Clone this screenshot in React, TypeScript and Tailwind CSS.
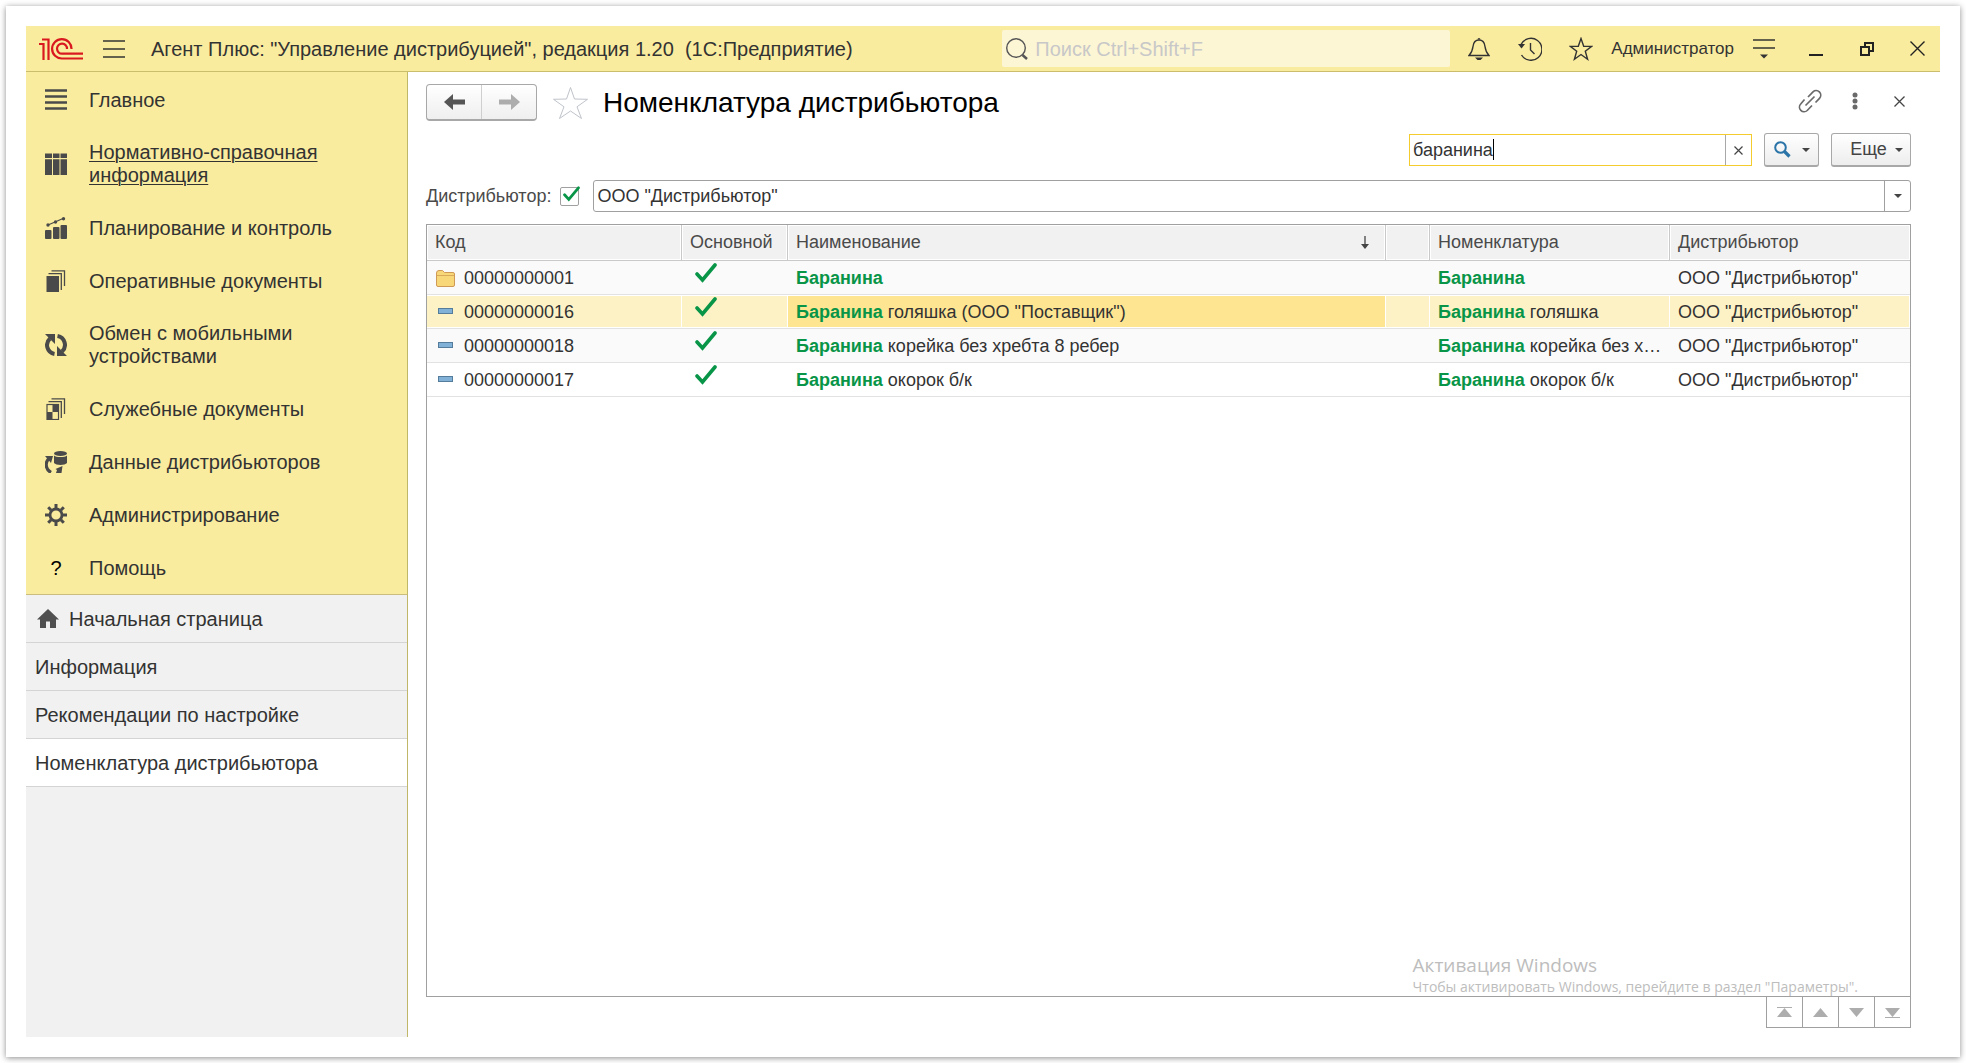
import { useState } from "react";
import type { ReactNode } from "react";
import clsx from "clsx";

const ink = "#4a4a4a";

const sections: { label: string; icon: ReactNode; active?: boolean }[] = [
  {
    label: "Главное",
    icon: <path d="M0 1.5h22M0 7.5h22M0 13.5h22M0 19.5h22" stroke={ink} strokeWidth="2.600" />,
  },
  {
    label: "Нормативно-справочная информация",
    active: true,
    icon: <path d="M0 .5h7v4.500H0zM8 .5h6.500v4.500H8zM15.500 .5h6.500v4.500h-6.500zM0 6.200h7V22H0zM8 6.200h6.500V22H8zM15.500 6.200h6.500V22h-6.500z" fill={ink} />,
  },
  {
    label: "Планирование и контроль",
    icon: (
      <>
        <rect y="13" width="6.500" height="9" rx="1" fill={ink} />
        <rect x="8" y="10" width="6.500" height="12" rx="1" fill={ink} />
        <rect x="15.500" y="8" width="6.500" height="14" rx="1" fill={ink} />
        <path d="M3 8l7-3 8-3.500" stroke={ink} strokeWidth="1.200" fill="none" />
        <circle cx="3" cy="8" r="1.700" fill={ink} />
        <circle cx="10.500" cy="5" r="1.700" fill={ink} />
        <circle cx="18.500" cy="1.800" r="1.700" fill={ink} />
      </>
    ),
  },
  {
    label: "Оперативные документы",
    icon: (
      <>
        <rect x="1.500" y="6" width="12.500" height="16" fill={ink} />
        <path d="M3.500 3.700h12.800V20M6.500.800h13V16" stroke={ink} strokeWidth="1.300" fill="none" />
      </>
    ),
  },
  {
    label: "Обмен с мобильными устройствами",
    icon: (
      <>
        <path d="M9.500 20A9 9 0 0 1 5 4.500M12.500 2A9 9 0 0 1 17 17.500" stroke={ink} strokeWidth="4" fill="none" />
        <path d="M0 0h10v10zM22 22H12V12z" fill={ink} />
      </>
    ),
  },
  {
    label: "Служебные документы",
    icon: (
      <>
        <rect x="2" y="6.500" width="11.500" height="15" stroke={ink} strokeWidth="1.200" fill="none" />
        <path d="M7.500 7H13v7H7.500zM2 14h5.500v7.500H2z" fill={ink} />
        <path d="M3.500 3.700h12.800V20M6.500.800h13V16" stroke={ink} strokeWidth="1.300" fill="none" />
      </>
    ),
  },
  {
    label: "Данные дистрибьюторов",
    icon: (
      <>
        <ellipse cx="15.500" cy="2.500" rx="6.500" ry="2.500" fill={ink} />
        <path d="M9 4.500c2 2 11 2 13 0V12c-2 2.500-11 2.500-13 0z" fill={ink} />
        <path d="M6 21.500C0 18 0 11 4 7.500" stroke={ink} strokeWidth="3.200" fill="none" />
        <path d="M0 5h8l-2 7zM11 22l1-3-1.500-1 7-3-1 7z" fill={ink} />
      </>
    ),
  },
  {
    label: "Администрирование",
    icon: (
      <>
        <circle cx="11" cy="11" r="6" stroke={ink} strokeWidth="2.800" fill="none" />
        <path d="M11 0v4M11 18v4M0 11h4M18 11h4M3.200 3.200l3 3M15.800 15.800l3 3M3.200 18.800l3-3M15.800 6.200l3-3" stroke={ink} strokeWidth="3" />
      </>
    ),
  },
  { label: "Помощь", icon: null },
];

const tabs = ["Начальная страница", "Информация", "Рекомендации по настройке", "Номенклатура дистрибьютора"];

const rows = [
  { code: "00000000001", folder: true, name: "", item: "" },
  { code: "00000000016", name: "голяшка (ООО \"Поставщик\")", item: "голяшка", selected: true },
  { code: "00000000018", name: "корейка без хребта 8 ребер", item: "корейка без хребта 8 ребер" },
  { code: "00000000017", name: "окорок б/к", item: "окорок б/к" },
];

function Logo() {
  return (
    <svg className="w-11 h-[22px]" viewBox="0 0 44 22" fill="none" stroke="#d9191f" strokeWidth="2.200">
      <path d="M0 6h4.500v16M3 1.500h6.500V22" />
      <path d="M32.500 11A9.700 9.700 0 1 0 23 20.500h21" />
      <path d="M28 11a5 5 0 1 0-5 4.700h21" />
    </svg>
  );
}

function Check({ className }: { className?: string }) {
  return (
    <svg className={className} viewBox="0 0 22 20" fill="none" stroke="#089548" strokeWidth="3.600" strokeLinecap="round">
      <path d="M2 11l5.500 6L20 2" />
    </svg>
  );
}

function Caret() {
  return (
    <svg className="w-2 h-1" viewBox="0 0 8 4">
      <path d="M0 0h8L4 4z" fill="#444" />
    </svg>
  );
}

function FolderIcon() {
  return (
    <svg className="w-[19px] h-[17px]" viewBox="0 0 19 17">
      <path d="M.5 3Q.5.500 3 .500h3.500L8.500 2.500H17q1.500 0 1.500 1.500v11q0 1.500-1.500 1.500H2Q.5 16.500.5 15z" fill="#f8d778" stroke="#cf9a55" />
      <path d="M1 5.500h17" stroke="#d9a95c" />
    </svg>
  );
}

function ItemIcon() {
  return (
    <svg className="w-[15px] h-[6px] ml-0.5 mb-1" viewBox="0 0 15 6">
      <rect x=".5" y=".5" width="14" height="5" fill="#82b1d8" stroke="#557c9b" />
    </svg>
  );
}

function TitleBar() {
  return (
    <header className="h-[46px] flex items-center bg-[#faec9e] border-b border-[#cbbd6c] pl-[13px] pr-[15px]">
      <Logo />
      <button aria-label="Меню" className="ml-5">
        <svg className="w-[22px] h-[18px]" viewBox="0 0 22 18" stroke="#333" strokeWidth="1.300">
          <path d="M0 1h22M0 9h22M0 17h22" />
        </svg>
      </button>
      <h1 className="ml-[26px] flex-1 text-[20px] whitespace-pre">Агент Плюс: "Управление дистрибуцией", редакция 1.20  (1С:Предприятие)</h1>
      <label className="w-[448px] h-[37px] flex items-center gap-[7px] pl-1 rounded-[2px] bg-[#fdf6d5]">
        <svg className="w-[22px] h-[22px] shrink-0" viewBox="0 0 22 22" fill="none" stroke="#555">
          <circle cx="10" cy="10" r="9.300" strokeWidth="1.400" />
          <path d="M16.500 17l4.500 4" strokeWidth="2.500" />
        </svg>
        <input aria-label="Поиск" placeholder="Поиск Ctrl+Shift+F" className="flex-1 min-w-0 text-[20px] bg-transparent outline-none placeholder:text-[#c8c8c8]" />
      </label>
      <div className="flex items-center ml-[18px]">
        <button aria-label="Уведомления">
          <svg className="w-[22px] h-[24px]" viewBox="0 0 22 24" fill="none" stroke="#333" strokeWidth="1.400">
            <path d="M1 18.500h20c-3-3-3.500-5-4-9C16.500 5 14 3 11 3S5.500 5 5 9.500c-.5 4-1 6-4 9z" />
            <path d="M9.500 2.500a1.500 1.500 0 0 1 3 0M7 20.500h8l-2.500 2.500h-3z" fill="#333" stroke="none" />
          </svg>
        </button>
        <button aria-label="История" className="ml-7">
          <svg className="w-6 h-6" viewBox="0 0 24 24" fill="none" stroke="#333" strokeWidth="1.400">
            <path d="M3 7.500A11 11 0 1 1 3.500 18M12.500 6v7l4 4" />
            <path d="M0 7h7l-3.500 4.500z" fill="#333" stroke="none" />
          </svg>
        </button>
        <button aria-label="Избранное" className="ml-[27px]">
          <svg className="w-6 h-6" viewBox="0 0 24 24" fill="none" stroke="#333" strokeWidth="1.400">
            <path d="M12 1.500l2.700 7.700 8 .200-6.400 4.900 2.300 7.900L12 17.500l-6.600 4.700 2.300-7.900L1.300 9.400l8-.200z" />
          </svg>
        </button>
        <button className="ml-[18px] text-[17px]">Администратор</button>
        <button aria-label="Настройка панели" className="ml-[19px]">
          <svg className="w-[22px] h-5" viewBox="0 0 22 20" stroke="#333" strokeWidth="1.400">
            <path d="M0 1h22M0 9h22" />
            <path d="M7 15.500h8l-4 4z" fill="#333" stroke="none" />
          </svg>
        </button>
        <button aria-label="Свернуть" className="ml-[34px]">
          <svg className="w-[14px] h-[14px]" viewBox="0 0 14 14">
            <path d="M0 13h14" stroke="#222" strokeWidth="2" />
          </svg>
        </button>
        <button aria-label="Развернуть" className="ml-[37px]">
          <svg className="w-[14px] h-[14px]" viewBox="0 0 14 14" fill="none" stroke="#222" strokeWidth="2">
            <path d="M1 5h8v8H1zM5 5V1h8v8H9" />
          </svg>
        </button>
        <button aria-label="Закрыть" className="ml-9">
          <svg className="w-[15px] h-[15px]" viewBox="0 0 15 15" stroke="#222" strokeWidth="1.400">
            <path d="M.5.500l14 14M14.500.500l-14 14" />
          </svg>
        </button>
      </div>
    </header>
  );
}

function Sidebar() {
  return (
    <aside className="w-[382px] shrink-0 flex flex-col bg-[#f1f1f1] border-r border-[#c0b768] text-[20px] leading-[23px]">
      <nav className="pt-px bg-[#faec9e] border-b border-[#cbbd7c]">
        {sections.map((s) => (
          <a key={s.label} href="#" className="min-h-[53px] flex items-center pt-[15px] pb-[14px] pl-[19px] pr-12">
            {s.icon ? (
              <svg className="w-[22px] h-[22px] shrink-0" viewBox="0 0 22 22">{s.icon}</svg>
            ) : (
              <span className="w-[22px] text-center text-black">?</span>
            )}
            <span className={clsx("ml-[22px]", s.active && "underline underline-offset-2 decoration-1")}>{s.label}</span>
          </a>
        ))}
      </nav>
      {tabs.map((tab, i) => (
        <a
          key={tab}
          href="#"
          className={clsx("h-12 flex items-center pt-0.5 pl-[9px] border-b border-[#d4d4d4]", i === tabs.length - 1 && "bg-white")}
        >
          {i === 0 && (
            <svg className="w-[22px] h-[19px] ml-0.5 mr-[10px] mb-0.5" viewBox="0 0 22 19">
              <path d="M11 0l11 10.500h-3V19h-6v-6.500H9V19H3v-8.500H0z" fill="#505050" />
            </svg>
          )}
          {tab}
        </a>
      ))}
    </aside>
  );
}

function FormHeader() {
  return (
    <div className="h-[37px] flex items-center">
      <div className="h-full w-[111px] flex rounded-[4px] border border-[#a8a8a8] border-b-2 bg-linear-to-b from-white to-[#efefef]">
        <button aria-label="Назад" className="flex-1 flex items-center justify-center border-r border-[#cfcfcf]">
          <svg className="w-[21px] h-4" viewBox="0 0 21 16">
            <path d="M0 8l9-8v5.500h12v5H9V16z" fill="#555" />
          </svg>
        </button>
        <button aria-label="Вперед" className="flex-1 flex items-center justify-center">
          <svg className="w-[21px] h-4" viewBox="0 0 21 16">
            <path d="M21 8l-9-8v5.500H0v5h12V16z" fill="#adadad" />
          </svg>
        </button>
      </div>
      <button aria-label="В избранное" className="ml-4">
        <svg className="w-[35px] h-[34px]" viewBox="0 0 35 34" fill="none" stroke="#bfc3ca">
          <path d="M17.500 1.500l4 11.500 13 .300L24 20.800l4.500 11.700-11-7.500-11 7.500L11 20.800.500 13.300l13-.300z" />
        </svg>
      </button>
      <h2 className="ml-[15px] flex-1 text-[28px] text-black">Номенклатура дистрибьютора</h2>
      <div className="flex items-center pb-[3px] pr-[6px]">
        <button aria-label="Ссылка">
          <svg className="w-6 h-6" viewBox="0 0 24 24" fill="none" stroke="#6a6a6a" strokeWidth="1.700">
            <path d="M7.500 16.500l9-9M10 8l5-5.200a4.600 4.600 0 0 1 6.500 6.500L17.500 13.500M14 16.500l-4.800 5a4.600 4.600 0 0 1-6.500-6.500L6.500 10.500" />
          </svg>
        </button>
        <button aria-label="Действия" className="ml-[30px]">
          <svg className="w-[6px] h-[18px]" viewBox="0 0 6 18" fill="#6a6a6a">
            <circle cx="3" cy="3" r="2.500" />
            <circle cx="3" cy="9" r="2.500" />
            <circle cx="3" cy="15" r="2.500" />
          </svg>
        </button>
        <button aria-label="Закрыть форму" className="ml-9">
          <svg className="w-[11px] h-[11px]" viewBox="0 0 11 11" stroke="#444" strokeWidth="1.300">
            <path d="M.5.500l10 10M10.500.500l-10 10" />
          </svg>
        </button>
      </div>
    </div>
  );
}

function SearchRow() {
  const [query, setQuery] = useState("баранина");

  return (
    <div className="mt-3 flex items-center justify-end">
      <div className="relative w-[343px] h-8 flex border border-[#f5cc2e]">
        <input
          aria-label="Поиск по списку"
          value={query}
          onChange={(e) => setQuery(e.target.value)}
          className="flex-1 min-w-0 pl-[3px] outline-none"
        />
        {query === "баранина" && <span className="absolute left-[83px] top-1 w-px h-[21px] bg-black" />}
        <button aria-label="Очистить" onClick={() => setQuery("")} className="w-[26px] flex items-center justify-center border-l border-[#a8a8a8]">
          <svg className="w-[9px] h-[9px]" viewBox="0 0 9 9" stroke="#444" strokeWidth="1.200">
            <path d="M.5.500l8 8M8.500.500l-8 8" />
          </svg>
        </button>
      </div>
      <button aria-label="Найти" className="ml-3 w-[55px] h-[34px] flex items-center justify-center gap-[11px] rounded-[3px] border border-[#a8a8a8] border-b-2 bg-linear-to-b from-white to-[#ededed]">
        <svg className="w-[17px] h-[17px]" viewBox="0 0 17 17" fill="none" stroke="#2b74a8">
          <circle cx="6.500" cy="6.500" r="5.300" strokeWidth="2" />
          <path d="M10.500 10.500l5 5" strokeWidth="3.200" />
        </svg>
        <Caret />
      </button>
      <button className="ml-3 w-20 h-[34px] pl-[11px] flex items-center justify-center gap-2 rounded-[3px] border border-[#a8a8a8] border-b-2 bg-linear-to-b from-white to-[#ededed] text-[#444]">
        Еще
        <Caret />
      </button>
    </div>
  );
}

function DistributorRow() {
  return (
    <div className="mt-[13px] flex items-center">
      <label htmlFor="use-distributor" className="text-[#4a4a4a]">Дистрибьютор:</label>
      <span className="relative ml-[9px] w-[19px] h-[19px]">
        <input id="use-distributor" type="checkbox" defaultChecked className="peer block appearance-none w-[19px] h-[19px] rounded-[2px] border border-[#a0a0a0] bg-white" />
        <Check className="absolute left-[3px] -top-px w-[17px] h-4 pointer-events-none invisible peer-checked:visible" />
      </span>
      <div className="relative flex-1 ml-[14px]">
        <select aria-label="Дистрибьютор" className="block w-full h-8 appearance-none rounded-[3px] border border-[#a0a0a0] bg-white pl-[3px] outline-none">
          <option>ООО "Дистрибьютор"</option>
        </select>
        <span className="absolute right-px inset-y-px w-[26px] flex items-center justify-center border-l border-[#a0a0a0] pointer-events-none">
          <Caret />
        </span>
      </div>
    </div>
  );
}

const headCell = "h-9 px-2 text-left font-normal border-b border-r border-[#c9c9c9] last:border-r-0 shadow-[inset_0_0_0_1px_#fff]";

function ItemsTable() {
  return (
    <table className="w-full table-fixed border-separate border-spacing-0">
      <colgroup>
        <col className="w-[255px]" />
        <col className="w-[106px]" />
        <col />
        <col className="w-11" />
        <col className="w-[240px]" />
        <col className="w-[240px]" />
      </colgroup>
      <thead className="bg-[#f1f1f1] text-[#4a4a4a]">
        <tr>
          <th className={headCell}>Код</th>
          <th className={headCell}>Основной</th>
          <th className={headCell}>
            <span className="flex items-center justify-between pr-2">
              Наименование
              <svg className="w-2 h-[13px]" viewBox="0 0 8 13">
                <path d="M4 0v11" stroke="#444" strokeWidth="1.300" />
                <path d="M0 8h8l-4 5z" fill="#444" />
              </svg>
            </span>
          </th>
          <th className={headCell} aria-label="Пометка" />
          <th className={headCell}>Номенклатура</th>
          <th className={headCell}>Дистрибьютор</th>
        </tr>
      </thead>
      <tbody>
        {rows.map((row, i) => {
          const cell = clsx(
            "h-[34px] pt-0.5 px-2 truncate border-b border-[#e2e2e2]",
            row.selected && "shadow-[inset_-1px_1px_#fff,inset_0_-1px_#fff]"
          );
          return (
            <tr key={row.code} className={row.selected ? "bg-[#fdf2c6]" : i % 2 === 0 ? "bg-[#fafafa]" : "bg-white"}>
              <td className={cell}>
                <span className="flex items-center">
                  <span className="w-[29px] flex pl-px">{row.folder ? <FolderIcon /> : <ItemIcon />}</span>
                  {row.code}
                </span>
              </td>
              <td className={clsx(cell, "align-top")}>
                <Check className="ml-[5px] w-[22px] h-5" />
              </td>
              <td className={clsx(cell, row.selected && "bg-[#fee592]")}>
                <b className="text-[#089548]">Баранина</b> {row.name}
              </td>
              <td className={cell} />
              <td className={cell}>
                <b className="text-[#089548]">Баранина</b> {row.item}
              </td>
              <td className={cell}>ООО "Дистрибьютор"</td>
            </tr>
          );
        })}
      </tbody>
    </table>
  );
}

const pagers = [
  { label: "В начало", d: "M0 0h15v1H0zM7.500 1L15 10H0z" },
  { label: "Вверх", d: "M7.500 1L15 10H0z" },
  { label: "Вниз", d: "M0 1h15L7.500 10z" },
  { label: "В конец", d: "M0 1h15L7.500 10zM0 10h15v1H0z" },
];

export default function App() {
  return (
    <div className="min-h-screen flex p-[6px] bg-white font-['Liberation_Sans',Arial,sans-serif] text-[18px] text-[#333]">
      <div className="flex-1 min-w-0 flex flex-col p-5 bg-white shadow-[0_1px_6px_rgba(0,0,0,0.45)]">
        <TitleBar />
        <div className="flex-1 flex">
          <Sidebar />
          <main className="flex-1 min-w-0 flex flex-col pt-3 pl-[18px] pr-[29px] pb-[9px]">
            <FormHeader />
            <SearchRow />
            <DistributorRow />
            <div className="relative mt-3 flex-1 border border-[#a0a0a0]">
              <ItemsTable />
              {/* Windows activation notice */}
              <div className="absolute right-[52px] bottom-0 font-['Open_Sans',sans-serif] text-[#bdbdbd] pointer-events-none">
                <p className="text-[19px] leading-[25px]">Активация Windows</p>
                <p className="text-[14px] leading-[18px]">Чтобы активировать Windows, перейдите в раздел "Параметры".</p>
              </div>
            </div>
            <div className="self-end flex -mt-px border-l border-[#a0a0a0]">
              {pagers.map((p) => (
                <button key={p.label} aria-label={p.label} className="w-9 h-8 flex items-center justify-center border border-l-0 border-[#a0a0a0]">
                  <svg className="w-[15px] h-[11px]" viewBox="0 0 15 11">
                    <path d={p.d} fill="#adadad" />
                  </svg>
                </button>
              ))}
            </div>
          </main>
        </div>
      </div>
    </div>
  );
}
